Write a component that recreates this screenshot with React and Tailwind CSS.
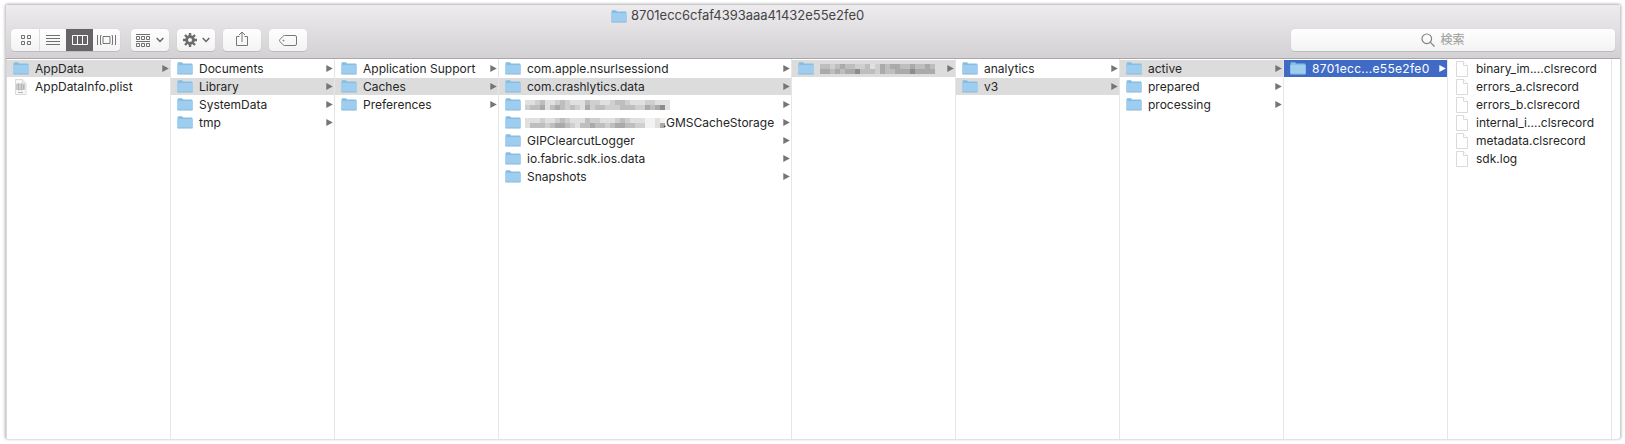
const ARROW = "ml-auto mr-[1px] h-[7px] w-[7px] shrink-0";

function Folder() {
  return (
    <svg viewBox="0 0 16 13" className="h-[13px] w-4 shrink-0">
      <path d="M.5 1.4Q.5.3 1.5.3H5l1.2 1.2h8.3q1 0 1 1V12H.5z" fill="#84bfe3" />
      <path d="M.3 3h15.4v8.6q0 .7-.7.7H1q-.7 0-.7-.7z" fill="#9fcdef" />
      <path d="M.5 12h15" stroke="#86b4d4" strokeWidth=".8" />
    </svg>
  );
}

function Page() {
  return (
    <svg viewBox="0 0 16 16" className="-my-px h-4 w-4 shrink-0" fill="#fff" stroke="#dadada">
      <path d="M2.500.5h7l4 4v11h-11z" />
      <path d="M9.500.5v4h4" />
    </svg>
  );
}

function Plist() {
  return (
    <svg viewBox="0 0 16 16" className="-my-px h-4 w-4 shrink-0" fill="#f7f7f7" stroke="#dadada">
      <path d="M2.500.5h7l3.500 3.500v11.500h-10.500z" />
      <path d="M3.500 5h8v5.500h-8z" fill="#d0d0d0" stroke="#c6c6c6" />
      <path d="M5.500 4.500v7M8.500 4.500v7M10.500 6v4M5 13.500h5" stroke="#b4b4b4" />
      <path d="M9.500.5v3.500h3.500" />
    </svg>
  );
}

const SHADES = ["bg-[#e0e0e0]", "bg-[#cfcfcf]", "bg-[#bebebe]", "bg-[#aaaaaa]", "bg-[#f2f2f2]", "bg-[#8c8c8c]"];

function Mosaic({ rows, className }) {
  return (
    <span className={`flex flex-col ${className}`}>
      {rows.map((r, i) => (
        <span key={i} className="flex">
          {[...r].map((c, j) => (
            <span key={j} className={`h-[5px] w-[5px] ${SHADES[c]}`} />
          ))}
        </span>
      ))}
    </span>
  );
}

const COLUMNS = [
  { w: "w-[164px]", sel: 0, items: [["AppData"], ["AppDataInfo.plist", "plist"]] },
  { w: "w-[164px]", sel: 1, items: [["Documents"], ["Library"], ["SystemData"], ["tmp"]] },
  { w: "w-[164px]", sel: 1, items: [["Application Support"], ["Caches"], ["Preferences"]] },
  {
    w: "w-[293px]",
    sel: 1,
    items: [
      ["com.apple.nsurlsessiond"],
      ["com.crashlytics.data"],
      ["", "folder", ["00120012100021100122100011000", "12230232121031221112221132350"], "-ml-0.5"],
      [".GMSCacheStorage", "folder", ["0001001210002110001210004404", "0222123321022322123322114403"], "-ml-0.5 -mr-0.5"],
      ["GIPClearcutLogger"],
      ["io.fabric.sdk.ios.data"],
      ["Snapshots"],
    ],
  },
  { w: "w-[164px]", sel: 0, items: [["", "folder", ["22123221120132332232232", "33232335222132233353333"], "mt-px"]] },
  { w: "w-[164px]", sel: 1, items: [["analytics"], ["v3"]] },
  { w: "w-[164px]", sel: 0, items: [["active"], ["prepared"], ["processing"]] },
  { w: "w-[164px]", sel: 0, active: true, items: [["8701ecc...e55e2fe0"]] },
  {
    w: "w-[164px]",
    items: [
      ["binary_im....clsrecord", "page"],
      ["errors_a.clsrecord", "page"],
      ["errors_b.clsrecord", "page"],
      ["internal_i....clsrecord", "page"],
      ["metadata.clsrecord", "page"],
      ["sdk.log", "page"],
    ],
  },
];

function Row({ item: [name, kind = "folder", mosaic, mosaicClass], selected, active }) {
  const tone = selected ? (active ? "bg-[#3f6bc6] text-white tracking-[0.3px]" : "bg-[#dcdcdc]") : "";
  return (
    <li className={`mb-px flex h-[17px] items-center pl-1.5 ${tone}`}>
      {kind === "folder" ? <Folder /> : kind === "plist" ? <Plist /> : <Page />}
      <span className="ml-1.5 flex items-center whitespace-nowrap leading-[17px]">
        {mosaic && <Mosaic rows={mosaic} className={mosaicClass} />}
        {name}
      </span>
      {kind === "folder" && (
        <svg viewBox="0 0 7 7" className={ARROW}>
          <path d="M.3 0 6.800 3.500.3 7z" fill={active ? "#fff" : "#757575"} />
        </svg>
      )}
    </li>
  );
}

const BTN =
  "flex h-[22px] items-center justify-center rounded bg-linear-to-b from-[#fefefe] to-[#f3f3f3] shadow-[0_1px_0_#bdbbbd,0_0_1px_#bbb]";

function Chevron() {
  return (
    <svg viewBox="0 0 8 6" className="h-1.5 w-2" fill="none" stroke="#666" strokeWidth="1.500">
      <path d="m.7 1 3.300 3.500L7.300 1" />
    </svg>
  );
}

function Toolbar() {
  return (
    <div className="mt-[3px] flex h-[22px] pl-[5px] pr-[5px]">
      <div className={`${BTN} w-[109px] overflow-hidden`}>
        <span className="flex h-full w-7 items-center justify-center pl-0.5">
          <svg viewBox="0 0 11 11" className="h-[11px] w-[11px]" fill="none" stroke="#707070">
            <path d="M.5.5h3v3h-3zM6.500.5h3v3h-3zM.5 6.500h3v3h-3zM6.500 6.500h3v3h-3z" />
          </svg>
        </span>
        <span className="flex h-full w-[27px] items-center justify-center border-l border-[#dcdcdc]">
          <svg viewBox="0 0 14 11" className="h-[11px] w-3.5" stroke="#707070">
            <path d="M0 .5h14M0 3.500h14M0 6.500h14M0 9.500h14" />
          </svg>
        </span>
        <span className="flex h-full w-[27px] items-center justify-center bg-[#666466]">
          <svg viewBox="0 0 16 11" className="h-[11px] w-4" fill="none" stroke="#fff">
            <path d="M.5.5h15v9H.5zM5.500 1v8M10.500 1v8" />
          </svg>
        </span>
        <span className="flex h-full w-[27px] items-center justify-center">
          <svg viewBox="0 0 19 11" className="h-[11px] w-[19px]" fill="none" stroke="#777">
            <path d="M.5 0v10M4.500.5h-1v9h1M6 1.500h7v7H6zM14.500.5h1v9h-1M18.500 0v10" />
          </svg>
        </span>
      </div>
      <div className={`${BTN} ml-[11px] w-[38px] gap-[5px]`}>
        <svg viewBox="0 0 15 13" className="h-[13px] w-[15px]" fill="none" stroke="#707070">
          <path d="M0 .5h14M.5 2.500h3v3h-3zM5.500 2.500h3v3h-3zM10.500 2.500h3v3h-3zM0 7.500h14M.5 9.500h3v3h-3zM5.500 9.500h3v3h-3zM10.500 9.500h3v3h-3z" />
        </svg>
        <Chevron />
      </div>
      <div className={`${BTN} ml-2 w-[38px] gap-[5px]`}>
        <svg viewBox="-7 -7 14 14" className="h-3.5 w-3.5" fill="none" stroke="#6b6b6b">
          <circle r="3.400" strokeWidth="2.800" />
          <path d="M0-7v3M0 4v3M-7 0h3M4 0h3M-5-5l2 2M3 3l2 2M5-5 3-3M-3 3l-2 2" strokeWidth="2.400" />
        </svg>
        <Chevron />
      </div>
      <div className={`${BTN} ml-2 w-[38px]`}>
        <svg viewBox="0 0 12 16" className="-mt-0.5 h-4 w-3" fill="none" stroke="#777">
          <path d="M3.500 5.500h-3v9h11v-9h-3M6 11V1M3 4l3-3 3 3" />
        </svg>
      </div>
      <div className={`${BTN} ml-2 w-[38px]`}>
        <svg viewBox="0 0 18 11" className="h-[11px] w-[18px]" fill="none" stroke="#777">
          <path d="M5.500.5h10.500q1.500 0 1.500 1.500v7q0 1.500-1.500 1.500H5.500q-1 0-1.600-.8L.7 6.200q-.4-.7 0-1.400l3.200-3.500q.6-.8 1.600-.8z" />
          <circle cx="4.500" cy="5.500" r=".5" />
        </svg>
      </div>
      <div className={`${BTN} ml-auto w-[324px] gap-[5px] pr-5 text-[12px] text-[#a6a6a6]`}>
        <svg viewBox="0 0 14 14" className="h-3.5 w-3.5" fill="none" stroke="#808080" strokeWidth="1.200">
          <circle cx="5.800" cy="5.800" r="4.800" />
          <path d="m9.200 9.200 4.300 4.300" />
        </svg>
        <span className="font-medium">検索</span>
      </div>
    </div>
  );
}

export default function App() {
  return (
    <div className="h-[444px] w-[1625px] bg-white pl-[5px] pt-1 font-['Inter','Noto_Sans_CJK_JP',sans-serif] text-[12px] text-[#262626]">
      <div className="flex h-[435px] w-[1616px] flex-col overflow-hidden rounded-[3px] border-x border-[#d0cfd2] bg-white shadow-[0_0_3px_#aaa]">
        <header className="h-[55px] shrink-0 border-b border-t border-b-[#a9a7aa] border-t-[#c9c9c9] bg-linear-to-b from-[#edebee] to-[#d3d1d4]">
          <h1 className="flex h-[22px] items-center pl-[605px] text-[13px] text-[#454545]">
            <Folder />
            <span className="ml-1 tracking-[-0.02px]">8701ecc6cfaf4393aaa41432e55e2fe0</span>
          </h1>
          <div className="-mt-px">
            <Toolbar />
          </div>
        </header>
        <main className="flex min-h-0 flex-1 border-l border-[#d8d8dc]">
          {COLUMNS.map((c, i) => (
            <ul key={i} className={`${c.w} shrink-0 border-r border-[#e6e6e6] pt-px`}>
              {c.items.map((it, j) => (
                <Row key={j} item={it} selected={c.sel === j} active={c.active} />
              ))}
            </ul>
          ))}
        </main>
      </div>
    </div>
  );
}
